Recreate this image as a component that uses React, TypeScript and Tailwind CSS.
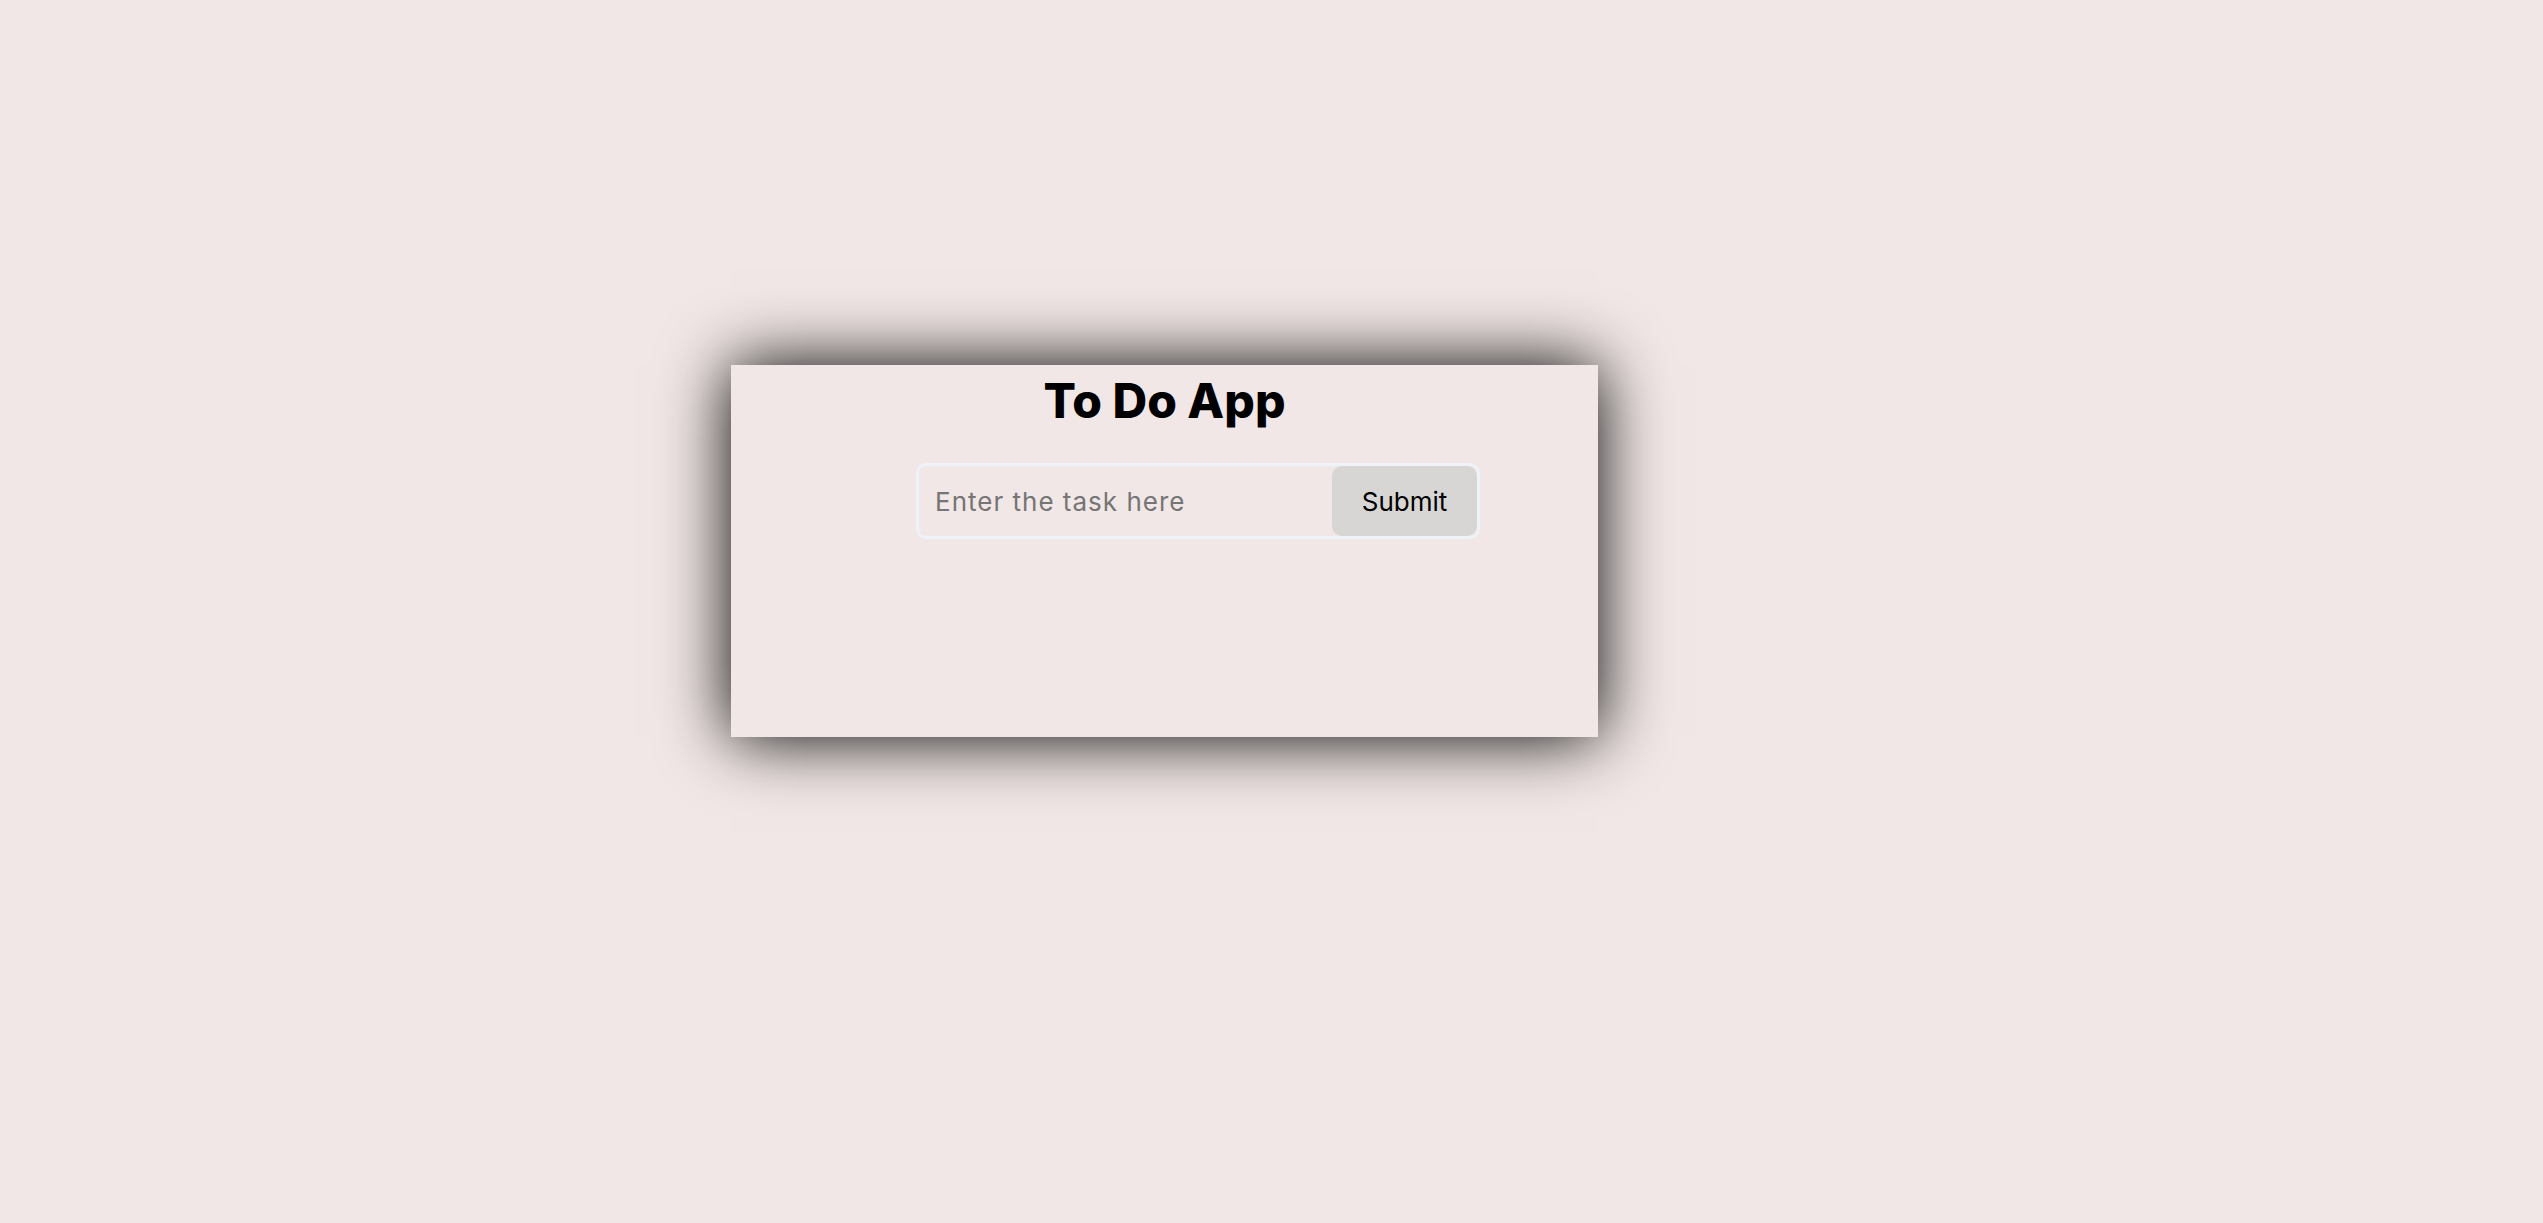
import { useState } from 'react'

export default function App() {
  const [task, setTask] = useState('')

  return (
    <div className="min-h-screen w-full bg-[#f1e7e6] pt-[365px] pl-[731px] font-['Inter',sans-serif]">
      {/* Card */}
      <div className="w-[867px] h-[372px] bg-[#f1e7e6] shadow-[0_0_65px_#000] pt-[12px]">
        <h1 className="text-center text-[48px] leading-[48px] font-extrabold text-black">To Do App</h1>

        <form
          onSubmit={e => e.preventDefault()}
          className="mt-[38px] ml-[185px] w-[564px] h-[76px] flex border-[3px] border-[#edf3f8] rounded-[10px] overflow-hidden">
          <input
            value={task}
            onChange={e => setTask(e.target.value)}
            placeholder="Enter the task here"
            className="flex-1 min-w-0 bg-transparent pl-4 text-[26px] tracking-[1px] text-black placeholder:text-[#757575] outline-none"
          />
          <button
            type="submit"
            className="w-[145px] h-full bg-[#d8d6d4] rounded-[10px] text-[26px] text-black">
            Submit
          </button>
        </form>
      </div>
    </div>
  )
}
